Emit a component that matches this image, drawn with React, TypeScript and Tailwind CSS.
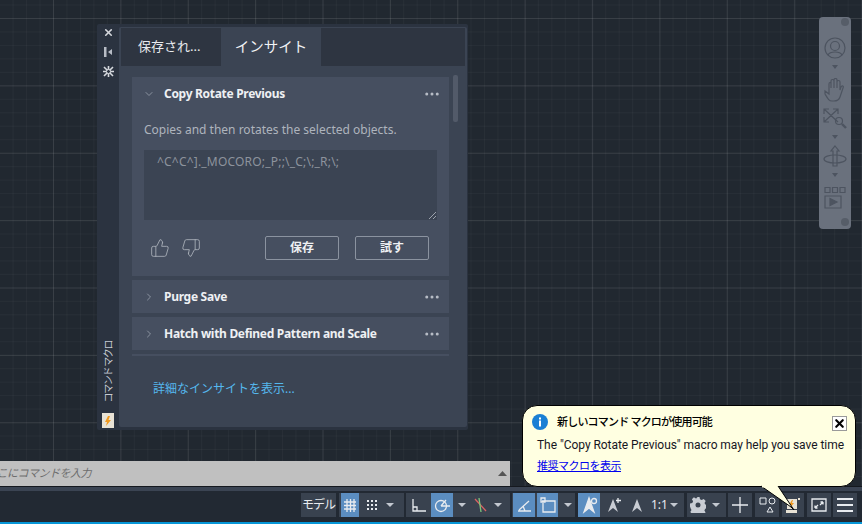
import { ChevronDown, ChevronRight, MoreHorizontal, ThumbsDown, ThumbsUp, X } from "lucide-react";

const cjk = "font-['Noto_Sans','Noto_Sans_CJK_JP',sans-serif]";

function Caret() {
  return (
    <svg width="10" height="6" viewBox="0 0 10 6" className="shrink-0">
      <path d="M1 1h8L5 5z" fill="#c3c8d0" />
    </svg>
  );
}

function Ico({ d, active, w = 22, children }: { d?: string; active?: boolean; w?: number; children?: React.ReactNode }) {
  return (
    <div className={`flex h-6 items-center justify-center ${active ? "bg-[#5b8dc0]" : ""}`} style={{ width: w }}>
      <svg width="18" height="18" viewBox="0 0 18 18" fill="none" stroke="#e8ebef" strokeWidth="1.3">
        {d && <path d={d} />}
        {children}
      </svg>
    </div>
  );
}

function Group({ children, className = "" }: { children: React.ReactNode; className?: string }) {
  return <div className={`flex h-6 items-center bg-[#39424f] ${className}`}>{children}</div>;
}

function MacroRow({ title }: { title: string }) {
  return (
    <div className="mt-1 flex h-[33px] items-center bg-[#464f60] pl-[11px] pr-[8px]">
      <ChevronRight size={12} strokeWidth={2} className="text-[#8b93a0]" />
      <span className="ml-[9px] flex-1 text-[12px] font-bold tracking-[-0.3px] text-[#eef0f3]">{title}</span>
      <MoreHorizontal size={18} className="text-[#b7bcc5]" />
    </div>
  );
}

function NavCaret({ className }: { className: string }) {
  return (
    <svg width="6" height="4" viewBox="0 0 6 4" className={className}>
      <path d="M0 0h6L3 4z" fill="#4d5460" />
    </svg>
  );
}

function NavBar() {
  const s = { fill: "none", stroke: "#4d5460", strokeWidth: 1.2 };
  return (
    <div className="absolute left-[819px] top-[17px] flex h-[212px] w-[32px] flex-col items-center rounded-[4px] bg-[#6a717d] pt-[20px]">
      <div className="absolute right-[2px] top-[1px] size-[8px] rounded-full bg-[#565d68]" />
      <svg width="22" height="22" viewBox="0 0 22 22" {...s}>
        <circle cx="11" cy="11" r="10" />
        <circle cx="11" cy="9" r="4.500" />
        <path d="M4 18c2-4 12-4 14 0" />
      </svg>
      <NavCaret className="mb-[9px] mt-[6px]" />
      <svg width="24" height="24" viewBox="0 0 24 24" {...s}>
        <path d="M2 13l4 3V6c0-2 2-2 2 0v4-7c0-2 3-2 3 0v7-8c0-2 3-2 3 0v8-6c0-2 3-2 3 0v8l1-3c1-2 3-1 2 1l-3 9c-1 3-3 4-6 4H9c-3 0-4-2-7-7z" />
      </svg>
      <svg width="26" height="22" viewBox="0 0 26 22" className="mt-[5px]" {...s}>
        <path d="M2 2l14 13M16 2L2 15M2 7V2h5M11 2h5v5M2 10v5h5" />
        <circle cx="17" cy="14" r="3.500" />
        <path d="M20 17l4 4" strokeWidth="2.400" />
      </svg>
      <NavCaret className="my-[6px]" />
      <svg width="26" height="22" viewBox="0 0 26 22" {...s}>
        <path d="M13 1l4 5h-2v15h-4V6H9z" />
        <ellipse cx="13" cy="14" rx="11" ry="4" />
      </svg>
      <NavCaret className="mb-[10px] mt-[6px]" />
      <svg width="22" height="22" viewBox="0 0 22 22" {...s}>
        <path d="M1 0.500h5v5H1zM8.500 0.500h5v5h-5zM16 0.500h5v5h-5zM1 9h16v12H1z" />
        <path d="M6 11.500l7 3.500-7 3.500z" fill="#4d5460" />
      </svg>
      <div className="absolute bottom-[3px] right-[2px] size-[8px] rounded-full bg-[#565d68]" />
    </div>
  );
}

function Palette() {
  return (
    <div className={`absolute left-[97px] top-[24px] flex h-[406px] w-[371px] rounded-[2px] bg-[#2b3340] ${cjk}`}>
      <div className="flex w-[22px] flex-col items-center pt-[3px]">
        <X size={11} strokeWidth={3.500} className="text-[#d5d8dd]" />
        <svg width="10" height="10" viewBox="0 0 10 10" className="mt-[9px]">
          <path d="M1 0h2.500v10H1zM9 2v6L5 5z" fill="#b7bcc5" />
        </svg>
        <svg width="11" height="11" viewBox="0 0 11 11" className="mt-[9px]" stroke="#d5d8dd" strokeWidth="1.600" fill="none">
          <path d="M1 1l9 9M10 1l-9 9M5.500 0v11M0 5.500h11" />
          <circle cx="5.500" cy="5.500" r="2" fill="#2b3340" strokeWidth="1" />
        </svg>
        <div className="flex-1" />
        <span className="mb-[11px] rotate-180 whitespace-nowrap text-[10px] leading-[12px] tracking-[-1.4px] text-[#c5cad2] [text-orientation:sideways] [writing-mode:vertical-rl]">コマンド マクロ</span>
        <div className="relative mb-[2px] flex h-[15px] w-[12px] items-center justify-center bg-[#e8e2d5]">
          <svg width="8" height="10" viewBox="0 0 8 10">
            <path d="M4 0L1 6h2L2 10l5-6H4.500L6 0z" fill="#f29a1f" />
          </svg>
        </div>
      </div>
      <div className="my-[3px] mr-[1px] flex flex-1 flex-col rounded-[2px] bg-[#3b4453]">
        <div className="mx-[2px] mt-[1px] flex h-[38px] w-[344px] bg-[#2e3541] text-[13px]">
          <div className="flex w-[100px] items-center pl-[17px] text-[#e8eaee]">保存され...</div>
          <div className="flex w-[100px] items-center justify-center bg-[#3b4453] text-[14.500px] text-[#f2f3f5]">インサイト</div>
        </div>
        <div className="relative flex-1 pl-[13px] pr-[18px] pt-[11px]">
          <div className="absolute right-[9px] top-[9px] h-[47px] w-[5px] rounded-[2px] bg-[#525a69]" />
          <div className="h-[199px] bg-[#464f60] px-3 pt-[6px]">
            <div className="flex h-[21px] items-center">
              <ChevronDown size={12} strokeWidth={2} className="-ml-px text-[#8b93a0]" />
              <span className="ml-[9px] flex-1 text-[12px] font-bold tracking-[-0.3px] text-[#eef0f3]">Copy Rotate Previous</span>
              <MoreHorizontal size={18} className="-mr-[4px] text-[#b7bcc5]" />
            </div>
            <p className="mt-[18px] text-[12px] leading-4 text-[#aeb4bd]">Copies and then rotates the selected objects.</p>
            <div className="relative mt-[12px] h-[70px] w-[293px] bg-[#3b4453] pl-[13px] pt-[4px] text-[12px] leading-4 tracking-[0.2px] text-[#8d939d]">
              ^C^C^]._MOCORO;_P;;\_C;\;_R;\;
              <svg width="7" height="7" viewBox="0 0 7 7" className="absolute bottom-[1px] right-[1px]" stroke="#9ca2ac">
                <path d="M0 7l7-7M4 7l3-3" />
              </svg>
            </div>
            <div className="mt-[16px] flex items-center">
              <ThumbsUp size={20} strokeWidth={1} className="ml-[6px] text-[#aeb4bd]" />
              <ThumbsDown size={20} strokeWidth={1} className="ml-[11px] text-[#aeb4bd]" />
              <button className="ml-[64px] h-6 w-[74px] rounded-[2px] border border-[#8b93a0] text-[12px] font-bold text-[#eef0f3]">保存</button>
              <button className="ml-[16px] h-6 w-[74px] rounded-[2px] border border-[#8b93a0] text-[12px] font-bold text-[#eef0f3]">試す</button>
            </div>
          </div>
          <MacroRow title="Purge Save" />
          <MacroRow title="Hatch with Defined Pattern and Scale" />
          <div className="mt-1 h-[2px] bg-[#464f60]" />
          <div className="mt-[24px] pl-[21px] text-[12px] leading-[18px] text-[#55b8ee]">詳細なインサイトを表示...</div>
        </div>
      </div>
    </div>
  );
}

function Balloon() {
  return (
    <div className={`absolute left-[522px] top-[405px] h-[82px] w-[334px] rounded-[15px] border border-black bg-[#ffffe1] pl-[9px] pt-[6px] text-black ${cjk}`}>
      <svg width="18" height="18" viewBox="0 0 18 18" className="absolute left-[8px] top-[7px]">
        <circle cx="9" cy="9" r="8" fill="#1a7fd4" />
        <rect x="8" y="7.500" width="2" height="6" fill="#fff" />
        <rect x="8" y="4.500" width="2" height="2" fill="#fff" />
      </svg>
      <div className="whitespace-nowrap pl-[25px] text-[11px] font-medium leading-[20px] tracking-[-0.8px]">新しいコマンド マクロが使用可能</div>
      <button className="absolute right-[8px] top-[10px] flex size-[15px] items-center justify-center border border-[#9a9a9a] bg-white">
        <X size={13} strokeWidth={4} />
      </button>
      <div className="mt-[3px] whitespace-nowrap pl-[5px] font-['Roboto','Noto_Sans',sans-serif] text-[12px] leading-[20px] tracking-[-0.05px] text-[#16161f]">The "Copy Rotate Previous" macro may help you save time</div>
      <div className="mt-px pl-[5px] text-[11px] leading-[20px] tracking-[-0.5px] text-[#0000ee] underline">推奨マクロを表示</div>
      <svg width="38" height="28" viewBox="0 0 38 28" className="absolute left-[237px] top-[79px]">
        <path d="M1 1L31 22L34 25L18 1" fill="#ffffe1" stroke="black" />
        <path d="M2 0h15v2.500H2z" fill="#ffffe1" />
      </svg>
    </div>
  );
}

function StatusBar() {
  return (
    <div className="flex h-[31px] items-start justify-end gap-[2px] bg-[#222933] pr-[5px] pt-[2px] text-[12px] text-[#e8ebef]">
      <Group className="w-[35px] justify-center whitespace-nowrap tracking-[-1px]">モデル</Group>
      <Group className="ml-px w-[65px] pl-[2px]">
        <Ico active w={18} d="M3 6h12M3 9.500h12M3 13h12M6 3v13M9.500 3v13M13 3v13" />
        <Ico w={26}>
          <path d="M4 5h2M8 5h2M12 5h2M4 9h2M8 9h2M12 9h2M4 13h2M8 13h2M12 13h2" strokeWidth="2" />
        </Ico>
        <Caret />
      </Group>
      <Group className="w-[104px]">
        <Ico w={25} d="M3 3v12h13M3 11h4v4" />
        <Ico active w={22}>
          <circle cx="8" cy="10" r="5.500" />
          <path d="M8 10l5-6M8 10h9" />
        </Ico>
        <div className="ml-[4px]"><Caret /></div>
        <Ico w={26}>
          <path d="M4 3l11 12" stroke="#d96464" />
          <path d="M8 2l2 14" stroke="#7cc47c" />
        </Ico>
        <Caret />
      </Group>
      <Group className="w-[63px] pl-[1px]">
        <Ico active w={22} d="M3 15h13M4 14L14 5M8 10l2 5" />
        <div className="ml-[2px]"><Ico active w={21}><path d="M3 5h13v11H4V7M2 2h4v4H2z" /></Ico></div>
        <div className="ml-[5px]"><Caret /></div>
      </Group>
      <Group className="ml-px w-[106px]">
        <Ico active w={22}>
          <path d="M9 2L4 16l5-4 5 4z" fill="#e8ebef" />
          <circle cx="14" cy="5" r="2.500" />
        </Ico>
        <Ico w={26}>
          <path d="M9 3L4 16l5-4 5 4z" fill="#c9cdd4" stroke="none" />
          <path d="M14 2v5M12 4.500h5" />
        </Ico>
        <Ico w={22}>
          <path d="M9 3L4 16l5-4 5 4z" fill="#c9cdd4" stroke="none" />
        </Ico>
        <span className="ml-[3px] w-[16px]">1:1</span>
        <div className="ml-[2px]"><Caret /></div>
      </Group>
      <Group className="ml-px w-[39px] pl-[3px]">
        <svg width="16" height="16" viewBox="0 0 16 16">
          <path fillRule="evenodd" d="M6.500 0h3l.5 2.300 1.700.8 2-1.200 2 2-1.200 2 .8 1.700 2.200.6v3l-2.300.5-.8 1.700 1.200 2-2 2-2-1.200-1.700.8-.4 2h-3l-.5-2.300-1.700-.8-2 1.200-2-2 1.200-2-.8-1.700L0 9.500v-3l2.300-.5.8-1.700-1.200-2 2-2 2 1.200 1.700-.8zM8 5.500a2.500 2.500 0 100 5 2.500 2.500 0 000-5z" fill="#c9cdd4" />
        </svg>
        <div className="ml-[5px]"><Caret /></div>
      </Group>
      <Group className="w-[24px] justify-center">
        <Ico w={22} d="M9 1v16M1 9h16" />
      </Group>
      <Group className="ml-[1px] w-[24px] justify-center">
        <Ico w={24}>
          <path d="M2 2h6v6H2zM9 16l3-5 3 5z" strokeWidth="1" />
          <circle cx="14" cy="5" r="3" strokeWidth="1" />
        </Ico>
      </Group>
      <Group className="ml-px w-[22px] justify-center">
        <svg width="14" height="16" viewBox="0 0 14 16">
          <path d="M1 2h10v10H1zM0 13h11v3H0z" fill="#e8e2d5" />
          <path d="M6 3L3 8h2L4 11l4-5H6l1-3z" fill="#f29a1f" />
          <rect x="12" y="1" width="2" height="2" fill="#e8e2d5" />
        </svg>
      </Group>
      <Group className="ml-[1px] w-[24px] justify-center">
        <Ico w={24}><path d="M2 3h14v12H2zM5 12l3-3M5 12v-2.500M5 12h2.500M13 6l-3 3M13 6v2.500M13 6h-2.500" /></Ico>
      </Group>
      <Group className="w-[24px] justify-center">
        <Ico w={24}><path d="M1 3h16M1 9h16M1 15h16" strokeWidth="1.800" /></Ico>
      </Group>
    </div>
  );
}

export default function App() {
  return (
    <div className="relative flex h-[524px] w-[862px] flex-col overflow-hidden bg-[#212830]">
      <div className="flex-1 bg-[#212830] [background-image:linear-gradient(#ffffff14_1px,transparent_1px),linear-gradient(90deg,#ffffff14_1px,transparent_1px),linear-gradient(#ffffff08_1px,transparent_1px),linear-gradient(90deg,#ffffff08_1px,transparent_1px)] [background-position:53px_18px,53px_18px,53px_18px,53px_18px] [background-size:67.400px_67.400px,67.400px_67.400px,13.480px_13.480px,13.480px_13.480px]">
        <div className="h-[461px]" />
        <div className={`relative flex h-[25px] w-[510px] items-center justify-end overflow-hidden bg-[#c0c0c0] ${cjk}`}>
          <span className="absolute -left-[14px] text-[11px] italic tracking-[-0.5px] text-[#6d6d6d]">ここにコマンドを入力</span>
          <svg width="9" height="5" viewBox="0 0 9 5" className="mr-[3px]"><path d="M0 5h9L4.500 0z" fill="#555" /></svg>
        </div>
      </div>
      <div className="h-px bg-[#15191f]" />
      <div className="h-1 bg-[#3b4453]" />
      <div className={cjk}><StatusBar /></div>
      <div className="h-[2px] bg-[#0696d7]" />
      <Palette />
      <NavBar />
      <Balloon />
    </div>
  );
}
